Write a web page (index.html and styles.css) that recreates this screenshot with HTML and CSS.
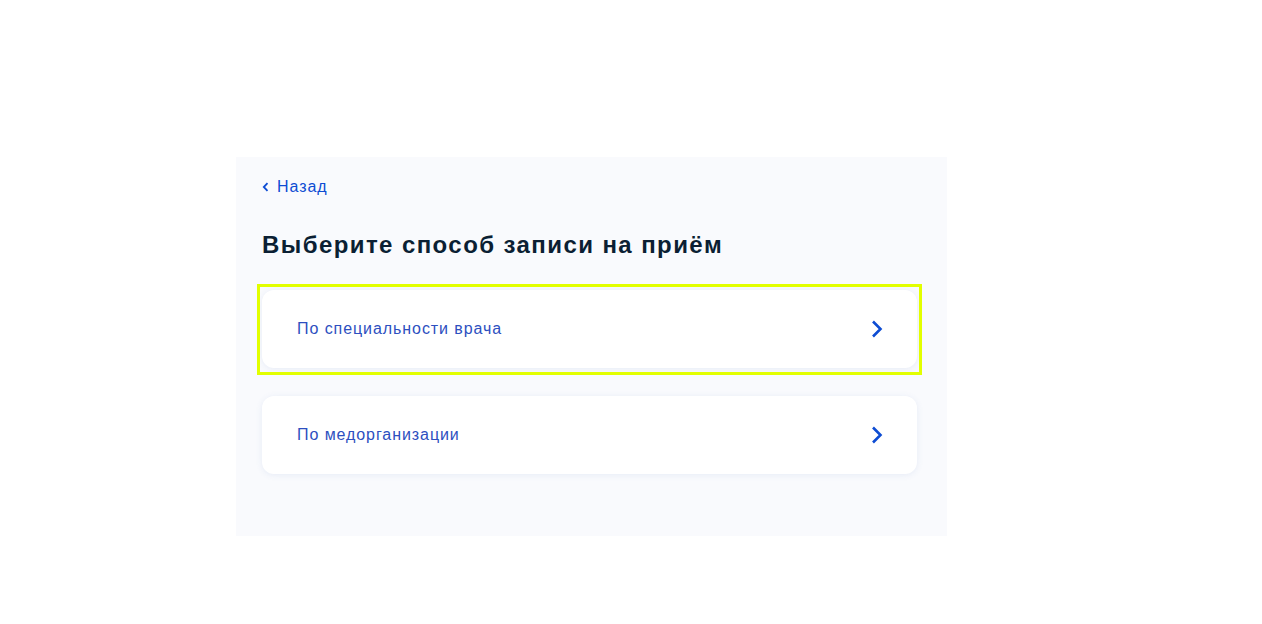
FILE: index.html
```html
<!DOCTYPE html>
<html lang="ru">

<head>
  <meta charset="UTF-8" />
  <meta name="viewport" content="width=device-width, initial-scale=1.0" />
  <title>Запись на приём</title>
  <link rel="stylesheet" href="styles.css">
</head>

<body>

  <div class="panel">
    <a class="back" href="#">
      <svg width="7" height="10" viewBox="0 0 7 10"><path d="M5.5 1.2 L1.8 5 L5.5 8.8" fill="none" stroke="#0d4cd3" stroke-width="1.8" /></svg>
      Назад
    </a>

    <h2>Выберите способ записи на приём</h2>

    <div class="options">
      <a class="card selected" href="#">
        <span>По специальности врача</span>
        <svg width="12" height="18" viewBox="0 0 12 18"><path d="M2 1.5 L9.5 9 L2 16.5" fill="none" stroke="#0d4cd3" stroke-width="2.6" /></svg>
      </a>
      <a class="card" href="#">
        <span>По медорганизации</span>
        <svg width="12" height="18" viewBox="0 0 12 18"><path d="M2 1.5 L9.5 9 L2 16.5" fill="none" stroke="#0d4cd3" stroke-width="2.6" /></svg>
      </a>
    </div>
  </div>

</body>

</html>
```

FILE: styles.css
```css
body {
  margin: 0;
  font-family: "Liberation Sans", Arial, sans-serif;
  letter-spacing: 0.058em;
  background: #fff;
}
.panel {
  width: 655px;
  margin: 157px 0 0 236px;
  padding: 20px 30px 62px 26px;
  background: #f9fafd;
}
.back {
  display: flex;
  align-items: center;
  gap: 8px;
  height: 20px;
  font-size: 16px;
  color: #0d4cd3;
  text-decoration: none;
}
h2 {
  margin: 32px 0 29px;
  font-size: 24px;
  line-height: 32px;
  font-weight: bold;
  letter-spacing: 0.059em;
  color: #0b1f33;
}
.options {
  display: flex;
  flex-direction: column;
  gap: 28px;
}
.card {
  position: relative;
  display: flex;
  align-items: center;
  justify-content: space-between;
  height: 78px;
  padding: 0 34px 0 35px;
  background: #fff;
  border-radius: 12px;
  box-shadow: 0 1px 6px rgba(102, 133, 196, 0.12);
  font-size: 16px;
  color: #2d4fc0;
  text-decoration: none;
}
.card.selected::after {
  content: "";
  position: absolute;
  top: -6px;
  left: -5px;
  right: -5px;
  bottom: -7px;
  border: 3px solid #e2ff00;
}
```
